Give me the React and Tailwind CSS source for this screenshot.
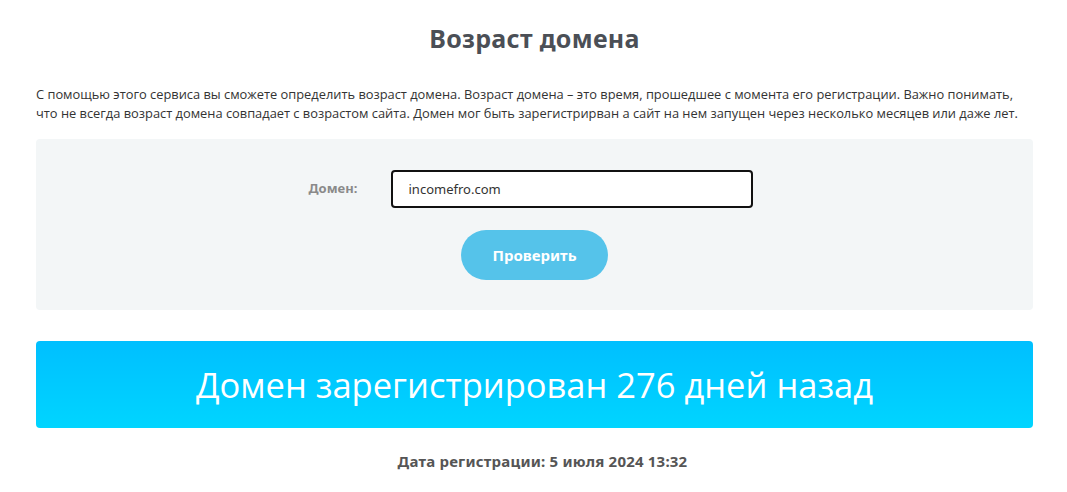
export default function App() {
  return (
    <div className="min-h-screen bg-white pl-9 pr-[34px] pt-[22px] font-['Open_Sans',sans-serif]">
      <h1 className="text-center text-[25px] leading-8 font-bold text-[#4b4f56] font-['Noto_Sans',sans-serif] tracking-[0.3px]">
        Возраст домена
      </h1>
      <p className="mt-[31px] text-[12.85px] leading-[19px] text-[#333] font-['Open_Sans',sans-serif]">
        С помощью этого сервиса вы сможете определить возраст домена. Возраст домена – это время, прошедшее с момента его регистрации. Важно понимать, что не всегда возраст домена совпадает с возрастом сайта. Домен мог быть зарегистрирван а сайт на нем запущен через несколько месяцев или даже лет.
      </p>
      <div className="mt-4 flex flex-col items-center rounded bg-[#f3f6f7] pt-[31px] pb-[30px]">
        <div className="flex items-center pr-[10px]">
          <label className="w-[84px] pl-[2px] text-[13px] font-bold text-[#8a8a8a] font-['Noto_Sans',sans-serif]">
            Домен:
          </label>
          <input
            defaultValue="incomefro.com"
            className="h-[38px] w-[362px] rounded border-2 border-[#111] bg-white pl-4 text-[13px] text-[#333] outline-none font-['Noto_Sans',sans-serif]"
          />
        </div>
        <button className="mt-[22px] h-[50px] w-[147px] rounded-full bg-[#55c3ea] text-[15px] font-bold text-white font-['Noto_Sans',sans-serif]">
          Проверить
        </button>
      </div>
      <div className="mt-[31px] flex h-[87px] items-center justify-center rounded bg-gradient-to-b from-[#00bfff] to-[#00d5ff]">
        <span className="text-[34.5px] text-white">Домен зарегистрирован 276 дней назад</span>
      </div>
      <p className="mt-[23px] pl-4 text-center text-[15px] leading-5 font-bold tracking-[0.2px] text-[#555] font-['Noto_Sans',sans-serif]">
        Дата регистрации: 5 июля 2024 13:32
      </p>
    </div>
  );
}
